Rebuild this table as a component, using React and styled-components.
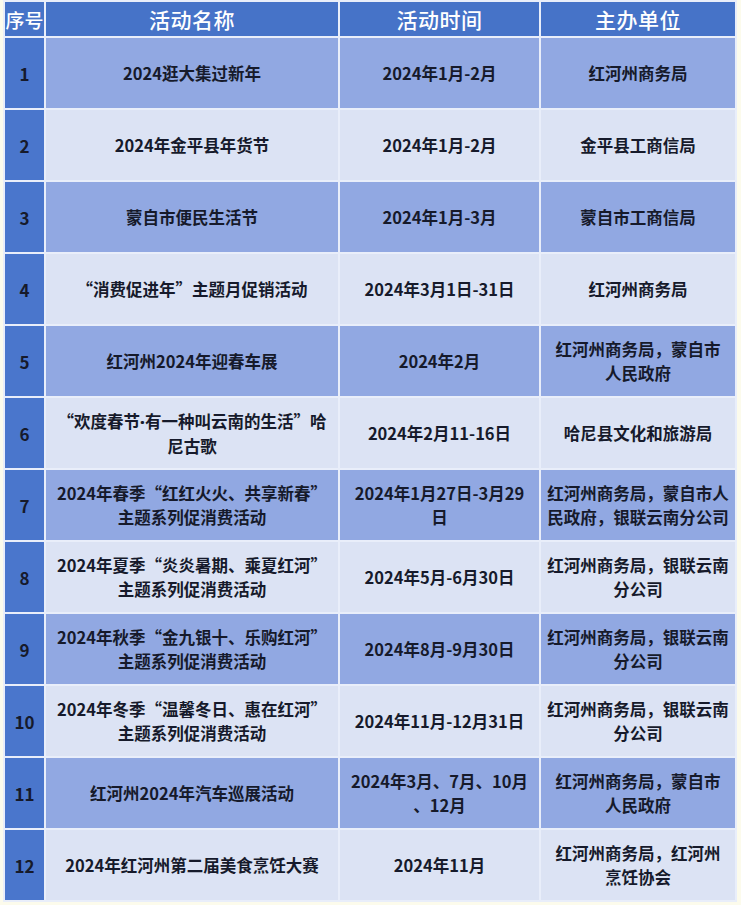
import React from 'react'
import styled, { createGlobalStyle } from 'styled-components'

// Page-wide rules
const GlobalStyle = createGlobalStyle`
  html, body {
    margin: 0;
    padding: 0;
    background: #fcfbec;
  }
  body {
    font-family: "Noto Sans CJK SC", "Noto Sans", sans-serif;
  }
`

const colors = {
  header: '#4673c8',
  seq: '#4a76cc',
  odd: '#91a8e2',
  even: '#dce3f4',
  line: '#e9eefa',
  text: '#161a2b',
}

const Table = styled.div`
  display: grid;
  grid-template-columns: 39px 292px 199px 194px;
  grid-template-rows: 34px repeat(12, 70px);
  gap: 2px;
  width: max-content;
  margin: 0 0 0 3px;
  padding: 2px;
  background: ${colors.line};
`

const HeadCell = styled.div`
  background: ${colors.header};
  color: #ffffff;
  font-size: ${(p) => (p.$narrow ? '19px' : '21px')};
  font-weight: 500;
  letter-spacing: ${(p) => (p.$narrow ? '0' : '0.5px')};
  display: flex;
  align-items: center;
  justify-content: center;
  overflow: hidden;
  white-space: nowrap;
`

const SeqCell = styled.div`
  background: ${colors.seq};
  color: ${colors.text};
  font-size: 17px;
  font-weight: 700;
  display: flex;
  align-items: center;
  justify-content: center;
`

const Cell = styled.div`
  background: ${(p) => (p.$odd ? colors.odd : colors.even)};
  color: ${colors.text};
  font-size: 16.5px;
  font-weight: 700;
  line-height: 24px;
  display: flex;
  flex-direction: column;
  align-items: center;
  justify-content: center;
  text-align: center;
  white-space: nowrap;
`

const Line = styled.span`
  display: block;
`

// narrow middle dot, the CJK one is full width
const Dot = styled.span`
  font-family: "Noto Sans", sans-serif;
  font-weight: 900;
`

const rows = [
  [['2024逛大集过新年'], ['2024年1月-2月'], ['红河州商务局']],
  [['2024年金平县年货节'], ['2024年1月-2月'], ['金平县工商信局']],
  [['蒙自市便民生活节'], ['2024年1月-3月'], ['蒙自市工商信局']],
  [['“消费促进年”主题月促销活动'], ['2024年3月1日-31日'], ['红河州商务局']],
  [['红河州2024年迎春车展'], ['2024年2月'], ['红河州商务局，蒙自市', '人民政府']],
  [[<>“欢度春节<Dot>·</Dot>有一种叫云南的生活”哈</>, '尼古歌'], ['2024年2月11-16日'], ['哈尼县文化和旅游局']],
  [['2024年春季“红红火火、共享新春”', '主题系列促消费活动'], ['2024年1月27日-3月29', '日'], ['红河州商务局，蒙自市人', '民政府，银联云南分公司']],
  [['2024年夏季“炎炎暑期、乘夏红河”', '主题系列促消费活动'], ['2024年5月-6月30日'], ['红河州商务局，银联云南', '分公司']],
  [['2024年秋季“金九银十、乐购红河”', '主题系列促消费活动'], ['2024年8月-9月30日'], ['红河州商务局，银联云南', '分公司']],
  [['2024年冬季“温馨冬日、惠在红河”', '主题系列促消费活动'], ['2024年11月-12月31日'], ['红河州商务局，银联云南', '分公司']],
  [['红河州2024年汽车巡展活动'], ['2024年3月、7月、10月', '、12月'], ['红河州商务局，蒙自市', '人民政府']],
  [['2024年红河州第二届美食烹饪大赛'], ['2024年11月'], ['红河州商务局，红河州', '烹饪协会']],
]

function App() {
  return (
    <>
      <GlobalStyle />
      <Table lang="zh-CN">
        <HeadCell $narrow>序号</HeadCell>
        <HeadCell>活动名称</HeadCell>
        <HeadCell>活动时间</HeadCell>
        <HeadCell>主办单位</HeadCell>
        {rows.map((row, i) => (
          <React.Fragment key={i}>
            <SeqCell>{i + 1}</SeqCell>
            {row.map((lines, j) => (
              <Cell key={j} $odd={i % 2 === 0}>
                {lines.map((t, k) => (
                  <Line key={k}>{t}</Line>
                ))}
              </Cell>
            ))}
          </React.Fragment>
        ))}
      </Table>
    </>
  )
}

export default App
